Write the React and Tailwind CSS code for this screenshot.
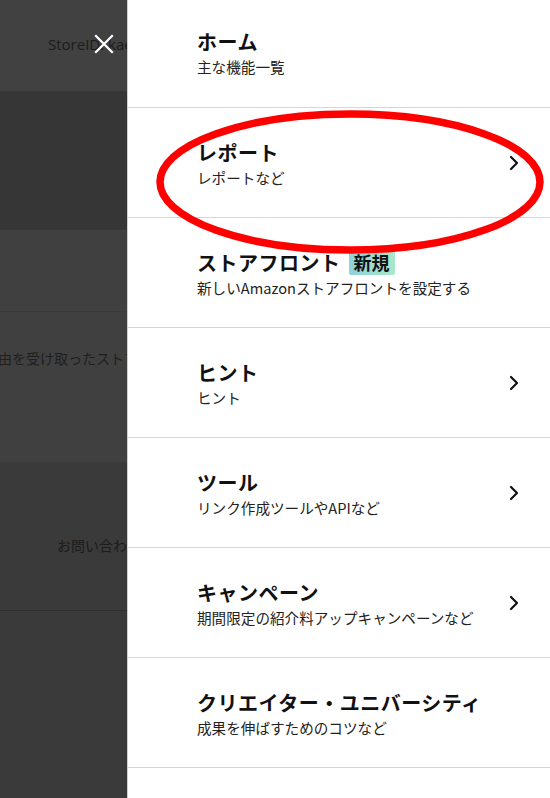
import React from "react";

const rows = [
  { title: "ホーム", sub: "主な機能一覧", chevron: false },
  { title: "レポート", sub: "レポートなど", chevron: true },
  { title: "ストアフロント", sub: "新しいAmazonストアフロントを設定する", chevron: false, badge: true },
  { title: "ヒント", sub: "ヒント", chevron: true },
  { title: "ツール", sub: "リンク作成ツールやAPIなど", chevron: true },
  { title: "キャンペーン", sub: "期間限定の紹介料アップキャンペーンなど", chevron: true },
  { title: "クリエイター・ユニバーシティ", sub: "成果を伸ばすためのコツなど", chevron: false },
];

function Chevron() {
  return (
    <svg width="12" height="16" viewBox="0 0 12 16" className="shrink-0">
      <path d="M3 2 L9 8 L3 14" fill="none" stroke="#111" strokeWidth="2.2" strokeLinecap="round" strokeLinejoin="round" />
    </svg>
  );
}

export default function App() {
  return (
    <div
      className="relative w-[550px] h-[798px] overflow-hidden flex bg-white"
      style={{ fontFamily: '"Noto Sans CJK JP", "Noto Sans", sans-serif' }}
    >
      {/* dimmed background page */}
      <div className="w-[127px] shrink-0 flex flex-col overflow-hidden whitespace-nowrap">
        <div className="h-[91px] bg-[#414141] flex items-center pl-[48px] relative">
          <span className="text-[15px] text-[#1c1c1c] mt-[-2px]" style={{ fontFamily: '"Open Sans", sans-serif' }}>
            StoreID: kaede
          </span>
          <svg width="20" height="20" viewBox="0 0 20 20" className="absolute left-[94px] top-[34px]">
            <path d="M2 2 L18 18 M18 2 L2 18" stroke="#fff" strokeWidth="2.2" strokeLinecap="square" />
          </svg>
        </div>
        <div className="h-[139px] bg-[#363636]" />
        <div className="h-[82px] bg-[#404040] border-b border-[#3a3a3a]" />
        <div className="h-[150px] bg-[#404040] flex items-start pt-[36px]">
          <span className="text-[14px] text-[#1f1f1f] ml-[-16px]">理由を受け取ったストアフロント</span>
        </div>
        <div className="h-[149px] bg-[#3a3a3a] flex items-end pl-[57px] border-b border-[#2e2e2e]">
          <span className="text-[14px] text-[#1c1c1c] mb-[54px]">お問い合わせ</span>
        </div>
        <div className="flex-1 bg-[#3a3a3a]" />
      </div>

      {/* menu panel */}
      <div className="flex-1 bg-white border-l border-[#cfcfcf] flex flex-col text-[#111]">
        {rows.map((r, i) => (
          <div
            key={i}
            className={`${i === 0 ? "h-[108px]" : "h-[110px]"} shrink-0 border-b border-[#d6d6d6] flex items-center pl-[69px] pr-[30px]`}
          >
            <div className={`flex-1 flex flex-col ${i === 0 ? "mt-[-3px]" : ""}`}>
              <div className="flex items-center gap-[8px] h-[30px]">
                <span className="text-[20px] font-bold leading-[30px] tracking-[0.5px]">{r.title}</span>
                {r.badge && (
                  <span className="text-[18px] font-bold leading-[25px] h-[25px] px-[5px] rounded-[2px] bg-gradient-to-r from-[#8fd2da] to-[#a9e8c9] text-[#111]">
                    新規
                  </span>
                )}
              </div>
              <span className="text-[14.6px] leading-[20px] text-[#222]">{r.sub}</span>
            </div>
            {r.chevron && <Chevron />}
          </div>
        ))}
        <div className="flex-1" />
      </div>

      {/* red annotation ellipse */}
      <svg className="absolute left-0 top-0 pointer-events-none" width="550" height="798">
        <ellipse cx="350" cy="182" rx="190" ry="68" fill="none" stroke="#ff0000" strokeWidth="7.5" />
      </svg>
    </div>
  );
}
